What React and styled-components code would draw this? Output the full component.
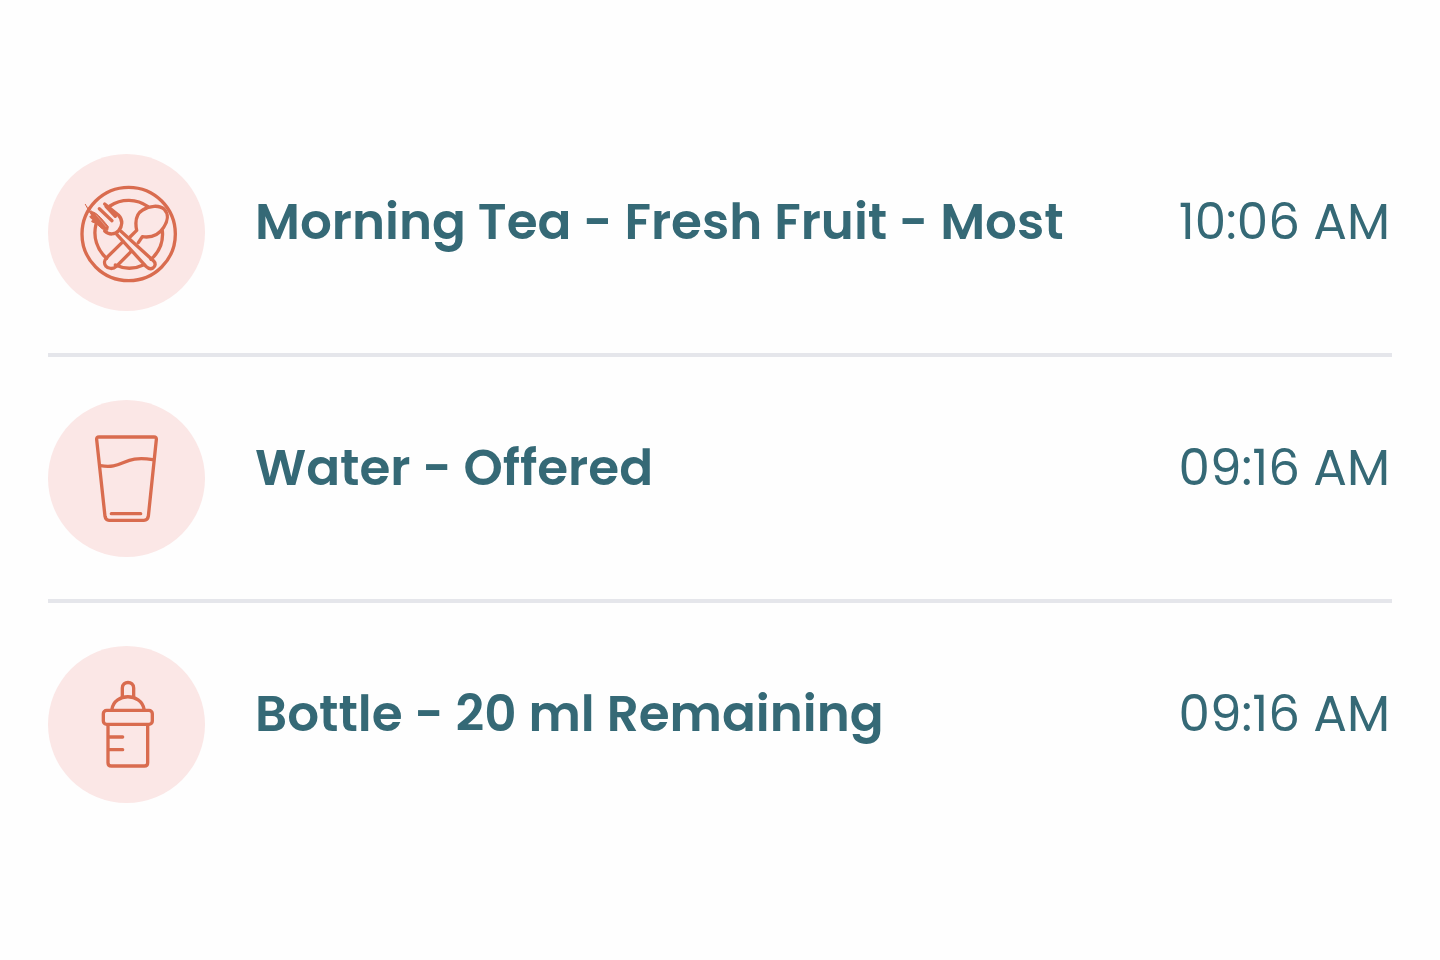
// src/App.jsx

import React from 'react';
import styled, { createGlobalStyle } from 'styled-components';

const GlobalStyle = createGlobalStyle`
    body {
        margin: 0;
        background-color: #fefefe;
        font-family: Poppins, Inter, sans-serif;
    }
`;

const List = styled.ul`
    list-style: none;
    margin: 0;
    padding: 111px 48px;
`;

const Row = styled.li`
    display: flex;
    align-items: center;
    padding: 43px 0 42px;
    border-bottom: 4px solid #e5e6eb;

    &:last-child {
        border-bottom: none;
    }
`;

const Badge = styled.div`
    flex: none;
    width: 157px;
    height: 157px;
    margin-right: 50px;
    border-radius: 50%;
    background-color: #fbe7e6;
`;

const Icon = styled.svg`
    display: block;
    width: 100%;
    height: 100%;
    fill: none;
    stroke: #d96c4f;
    stroke-width: 10px;
    stroke-linecap: round;
    stroke-linejoin: round;
`;

const Details = styled.div`
    flex: 1;
    display: flex;
    justify-content: space-between;
    align-items: baseline;
    padding: 0 2px 22px 0;
    color: #356976;
    font-size: 50px;
    line-height: 72px;
    white-space: nowrap;
`;

const Title = styled.span`
    font-weight: 600;
`;

const Time = styled.time`
    font-weight: 400;
`;

const MealIcon = () => (
    <Icon viewBox="24 27 471 471" aria-hidden="true">
        <circle cx="266" cy="267" r="140" />
        <path d="M210 183A101 101 0 0 1 324 185M168 238A101 101 0 0 0 200 340M226 360A101 101 0 0 0 312 359M367 257A101 101 0 0 1 333 343" />
        {/* spoon */}
        <path d="M290 256C284 226 289 206 308 195C328 182 358 179 373 193C386 207 384 228 371 247C355 272 334 279 307 275L295 293M273 320L229 364C220 373 204 372 198 364C191 356 193 345 201 337L249 290M270 276L290 256" />
        {/* fork */}
        <path d="M242 258L341 348C348 355 346 364 339 369C332 373 324 370 318 364L231 269" />
        <path d="M194 177L235 210C250 225 247 244 236 257C225 270 207 270 194 258M198 184L226 214M178 191L216 227" />
        <path
            d="M149 199C168 199 180 215 205 245L203 256L187 252L169 236L155 230L158 224L149 216L154 211Z"
            fill="#d96c4f"
            strokeWidth="3"
        />
        <path d="M169 210L198 245" stroke="#e9a798" strokeWidth="2" />
        <path d="M136 178L149 202M143 187L154 197" strokeWidth="3" />
    </Icon>
);

const WaterIcon = () => (
    <Icon viewBox="24 30 471 471" aria-hidden="true">
        <path d="M177 141H342Q350 141 349 149L325 379Q323 391 312 391H207Q197 391 195 379L170 149Q169 141 177 141Z" />
        <path d="M181 227C250 240 250 193 338 209" />
        <path d="M214 371H302" />
    </Icon>
);

const BottleIcon = () => (
    <Icon viewBox="24 30 471 471" aria-hidden="true">
        <path d="M247 182V156C247 134 281 134 281 156V182" />
        <path d="M216 219C224 170 303 170 312 219" />
        <rect x="190" y="223" width="147" height="42" rx="10" />
        <path d="M204 266V380Q204 390 214 390H313Q323 390 323 380V266" />
        <path d="M206 303H248M206 341H248" />
    </Icon>
);

const entries = [
    {
        icon: MealIcon,
        title: 'Morning Tea - Fresh Fruit - Most',
        time: '10:06 AM',
    },
    { icon: WaterIcon, title: 'Water - Offered', time: '09:16 AM' },
    { icon: BottleIcon, title: 'Bottle - 20 ml Remaining', time: '09:16 AM' },
];

const App = () => (
    <>
        <GlobalStyle />
        <List>
            {entries.map(({ icon: EntryIcon, title, time }) => (
                <Row key={title}>
                    <Badge>
                        <EntryIcon />
                    </Badge>
                    <Details>
                        <Title>{title}</Title>
                        <Time>{time}</Time>
                    </Details>
                </Row>
            ))}
        </List>
    </>
);

export default App;
